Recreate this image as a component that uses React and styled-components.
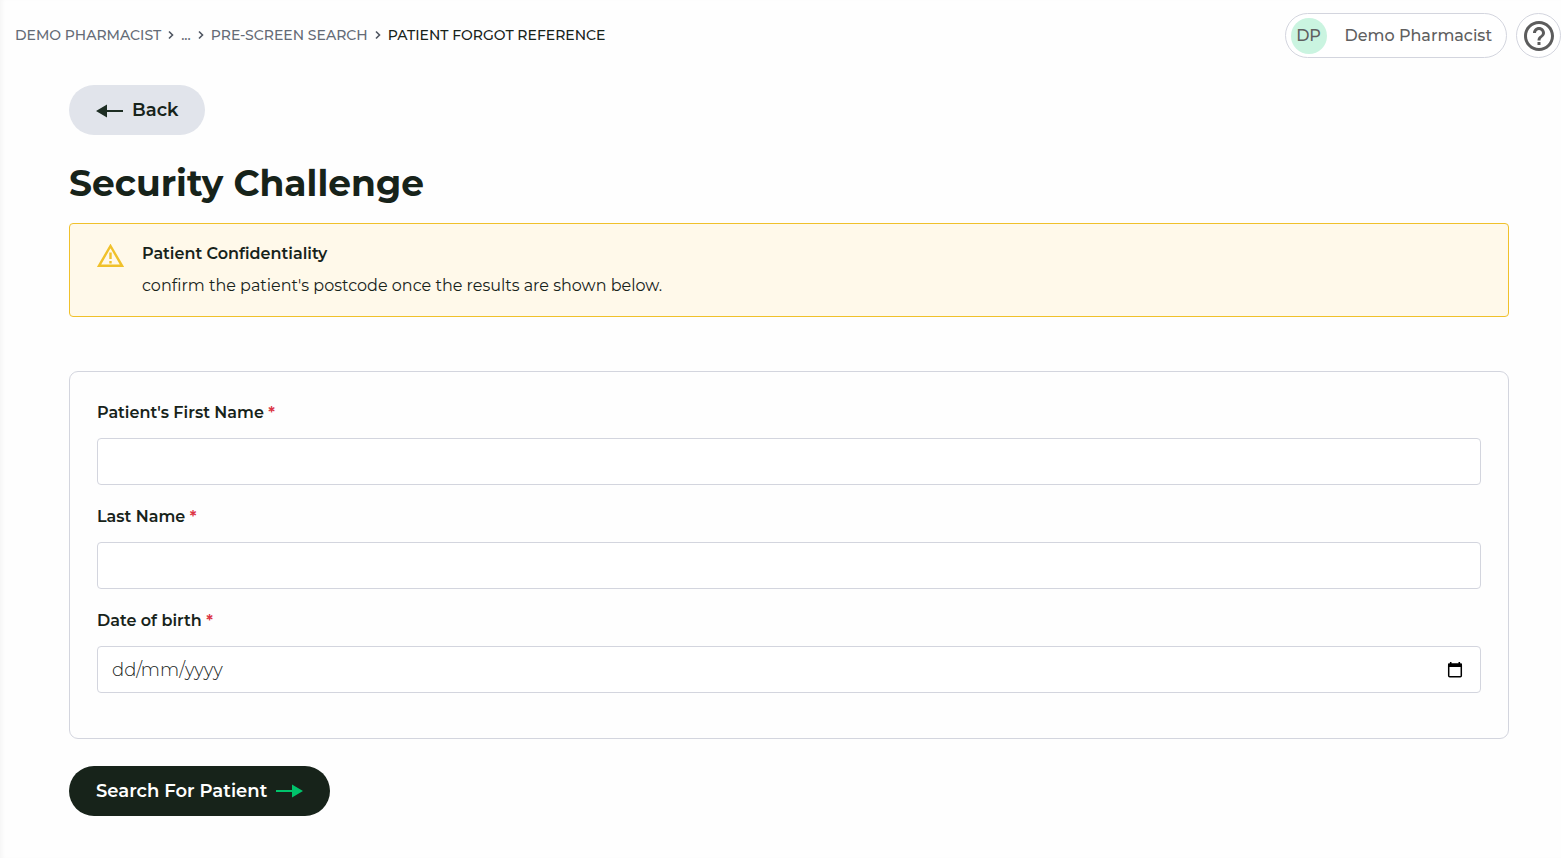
import React from "react";
import styled, { createGlobalStyle } from "styled-components";
import { MdHelpOutline } from "react-icons/md";

const crumbs = ["DEMO PHARMACIST", "...", "PRE-SCREEN SEARCH"];

const Chevron = () => (
  <svg width="6" height="10" viewBox="0 0 6 10" fill="none" aria-hidden="true">
    <path d="M1 1.5 4.5 5 1 8.5" stroke="#4f5661" strokeWidth="1.6" />
  </svg>
);

const ArrowLeft = () => (
  <svg width="28" height="16" viewBox="0 -2 28 16" aria-hidden="true">
    <path d="M0 7 11 0.5V6H27V8H11V13.5Z" fill="#1d2d23" />
  </svg>
);

const ArrowRight = () => (
  <svg width="28" height="16" viewBox="0 -1 28 16" aria-hidden="true">
    <path d="M28 7 17 0.5V6H1V8H17V13.5Z" fill="#00c36b" />
  </svg>
);

const Warning = () => (
  <svg width="28" height="25" viewBox="0 1 28 25" fill="none" aria-hidden="true">
    <path
      d="M14.5 3 26 22.8H3Z"
      stroke="#f0c12b"
      strokeWidth="2.4"
    />
    <path d="M14.5 9.5V16M14.5 18V20.5" stroke="#f0c12b" strokeWidth="2.4" />
  </svg>
);

const Calendar = () => (
  <svg width="16" height="18" viewBox="0 0 16 18" fill="none" aria-hidden="true">
    <path d="M1 2.5H15V6H1Z" fill="#000" />
    <path d="M3.7 1V3M12.3 1V3" stroke="#000" strokeWidth="1.6" />
    <rect x="1.7" y="3.2" width="12.6" height="12.6" rx="1" stroke="#000" strokeWidth="1.5" />
  </svg>
);

const App = () => {
  return (
    <>
      <GlobalStyle />
      <Page>
        <Header>
          <nav aria-label="Breadcrumb">
            <Crumbs>
              {crumbs.map((crumb) => (
                <Crumb key={crumb}>
                  <CrumbLink href="#">{crumb}</CrumbLink>
                  <Chevron />
                </Crumb>
              ))}
              <Crumb $current aria-current="page">
                PATIENT FORGOT REFERENCE
              </Crumb>
            </Crumbs>
          </nav>
          <HeaderActions>
            <UserButton type="button">
              <Avatar>DP</Avatar>
              Demo Pharmacist
            </UserButton>
            <HelpButton type="button" aria-label="Help">
              <MdHelpOutline size={36} />
            </HelpButton>
          </HeaderActions>
        </Header>

        <Content>
          <PillButton type="button">
            <ArrowLeft />
            Back
          </PillButton>
          <Title>Security Challenge</Title>

          <Alert role="note">
            <Warning />
            <div>
              <AlertTitle>Patient Confidentiality</AlertTitle>
              <AlertText>
                confirm the patient's postcode once the results are shown below.
              </AlertText>
            </div>
          </Alert>

          <form onSubmit={(e) => e.preventDefault()}>
            <Card>
              <Field>
                <Label htmlFor="firstName">
                  Patient's First Name <Required>*</Required>
                </Label>
                <Input id="firstName" type="text" required />
              </Field>
              <Field>
                <Label htmlFor="lastName">
                  Last Name <Required>*</Required>
                </Label>
                <Input id="lastName" type="text" required />
              </Field>
              <Field>
                <Label htmlFor="dob">
                  Date of birth <Required>*</Required>
                </Label>
                <DateBox>
                  <DateInput id="dob" type="text" placeholder="dd/mm/yyyy" required />
                  <CalendarButton type="button" aria-label="Show date picker">
                    <Calendar />
                  </CalendarButton>
                </DateBox>
              </Field>
            </Card>
            <PillButton type="submit" $primary>
              Search For Patient
              <ArrowRight />
            </PillButton>
          </form>
        </Content>
      </Page>
    </>
  );
};

export default App;

const GlobalStyle = createGlobalStyle`
  *, *::before, *::after {
    box-sizing: border-box;
  }

  body {
    margin: 0;
    background: #fefefe;
    color: #17231a;
    font-family: Montserrat, Inter, sans-serif;
    font-size: 16px;
  }

  button, input {
    font-family: inherit;
    color: inherit;
  }
`;

const Page = styled.div`
  min-height: 100vh;
  box-shadow: inset 4px 0 4px -2px #f5f5f5;
`;

const Header = styled.header`
  display: flex;
  justify-content: space-between;
  align-items: center;
  padding: 13px 0 0 15px;
`;

const Crumbs = styled.ol`
  display: flex;
  gap: 7px;
  margin: 0;
  padding: 0 0 2px;
  list-style: none;
`;

const Crumb = styled.li`
  display: flex;
  align-items: center;
  gap: 7px;
  font-size: 14px;
  line-height: 20px;
  font-weight: 500;
  color: ${(props) => (props.$current ? "#17231a" : "#646b76")};
`;

const CrumbLink = styled.a`
  color: inherit;
  text-decoration: none;
`;

const HeaderActions = styled.div`
  display: flex;
  gap: 9px;
`;

const UserButton = styled.button`
  display: flex;
  align-items: center;
  gap: 18px;
  height: 45px;
  padding: 0 14px 0 5px;
  border: 1px solid #d3d5de;
  border-radius: 24px;
  background: #fff;
  color: #5f5f5f;
  font-size: 16px;
  font-weight: 500;
  cursor: pointer;
`;

const Avatar = styled.span`
  display: flex;
  align-items: center;
  justify-content: center;
  width: 36px;
  height: 36px;
  border-radius: 50%;
  background: #caf4e0;
`;

const HelpButton = styled.button`
  display: flex;
  align-items: center;
  justify-content: center;
  width: 45px;
  height: 45px;
  padding: 0;
  border: 1px solid #d3d5de;
  border-radius: 50%;
  background: #fff;
  color: #5c5c5c;
  cursor: pointer;
`;

const Content = styled.main`
  padding: 27px 52px 42px 69px;
`;

const PillButton = styled.button`
  display: inline-flex;
  align-items: center;
  gap: 8px;
  height: 50px;
  padding: 0 27px;
  border: 0;
  border-radius: 25px;
  background: ${(props) => (props.$primary ? "#17231a" : "#e1e4eb")};
  color: ${(props) => (props.$primary ? "#fff" : "#17231a")};
  font-size: 18px;
  font-weight: 600;
  cursor: pointer;
`;

const Title = styled.h1`
  margin: 24px 0 16px;
  font-size: 36px;
  line-height: 48px;
  font-weight: 700;
`;

const Alert = styled.div`
  display: flex;
  align-items: flex-start;
  gap: 18px;
  margin-bottom: 54px;
  padding: 20px 26px;
  border: 1px solid #f0c12b;
  border-radius: 4px;
  background: #fff9ea;
  line-height: 20px;
`;

const AlertTitle = styled.div`
  margin-bottom: 12px;
  font-weight: 600;
`;

const AlertText = styled.p`
  margin: 0;
`;

const Card = styled.div`
  display: flex;
  flex-direction: column;
  gap: 22px;
  margin-bottom: 27px;
  padding: 31px 27px 45px;
  border: 1px solid #d3d5de;
  border-radius: 9px;
`;

const Field = styled.div`
  display: flex;
  flex-direction: column;
  gap: 15px;
`;

const Label = styled.label`
  line-height: 20px;
  font-weight: 600;
`;

const Required = styled.span`
  color: #dc3545;
`;

const Input = styled.input`
  width: 100%;
  height: 47px;
  padding: 0 14px;
  border: 1px solid #d3d5de;
  border-radius: 4px;
  background: #fff;
  font-size: 18px;
`;

const DateBox = styled.div`
  display: flex;
  align-items: center;
  height: 47px;
  padding-right: 17px;
  border: 1px solid #d3d5de;
  border-radius: 4px;
  background: #fff;
`;

const DateInput = styled.input`
  flex: 1;
  min-width: 0;
  padding: 0 14px;
  border: 0;
  background: transparent;
  font-size: 18px;
  font-weight: 300;

  &::placeholder {
    color: #17231a;
    opacity: 1;
  }
`;

const CalendarButton = styled.button`
  display: flex;
  padding: 0;
  border: 0;
  background: transparent;
  cursor: pointer;
`;
